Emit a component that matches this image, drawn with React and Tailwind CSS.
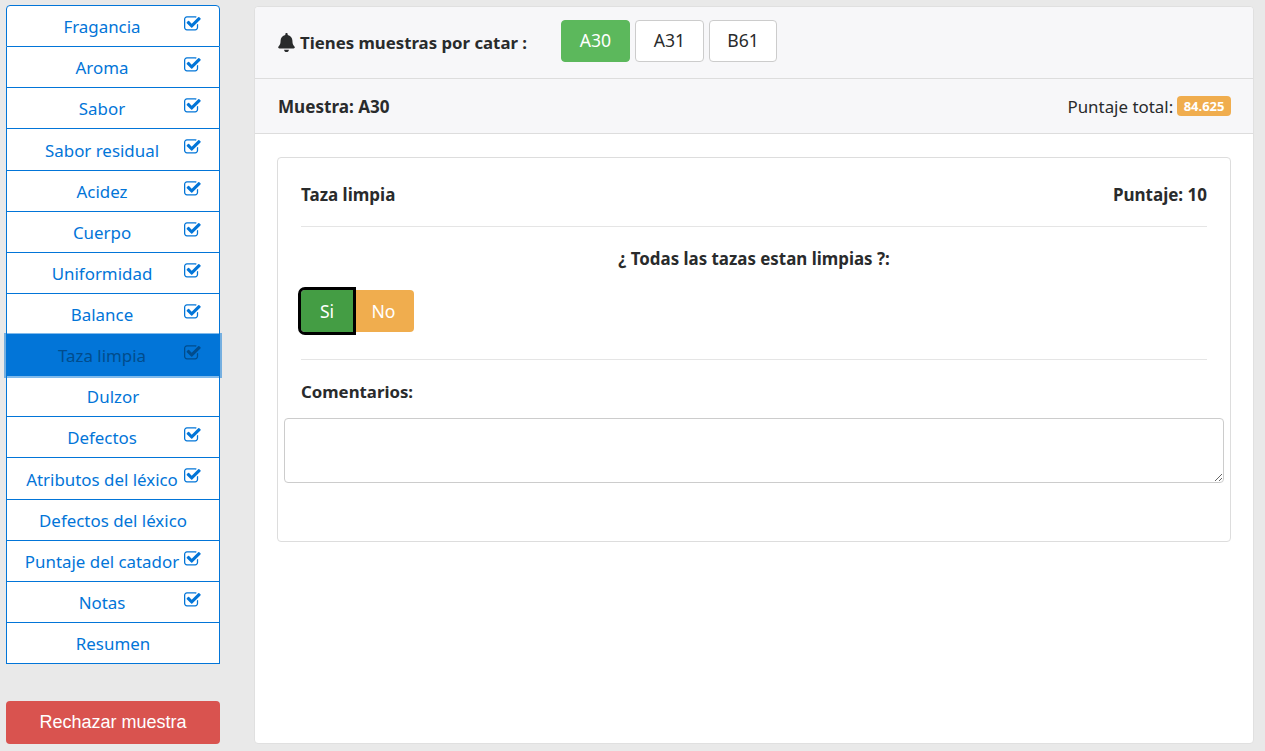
import React from "react";

const CHECK = "M1408 930v318q0 119-84.5 203.5T1120 1536H288q-119 0-203.5-84.5T0 1248V416q0-119 84.5-203.5T288 128h832q63 0 117 25 15 7 18 23 3 17-9 29l-49 49q-10 10-23 10-3 0-9-2-23-6-45-6H288q-66 0-113 47t-47 113v832q0 66 47 113t113 47h832q66 0 113-47t47-113V994q0-13 9-22l64-64q10-10 23-10 6 0 12 3 20 8 20 29zm231-489l-814 814q-24 24-57 24t-57-24L281 825q-24-24-24-57t24-57l110-110q24-24 57-24t57 24l263 263 647-647q24-24 57-24t57 24l110 110q24 24 24 57t-24 57z";

const items = [
  ["Fragancia", true], ["Aroma", true], ["Sabor", true], ["Sabor residual", true],
  ["Acidez", true], ["Cuerpo", true], ["Uniformidad", true], ["Balance", true],
  ["Taza limpia", true, true], ["Dulzor", false], ["Defectos", true],
  ["Atributos del léxico", true], ["Defectos del léxico", false],
  ["Puntaje del catador", true], ["Notas", true], ["Resumen", false],
];

function CheckIcon({ active }) {
  return (
    <svg viewBox="0 0 1792 1792" className={"absolute right-[17px] top-[9px] w-[18px] h-[18px] " + (active ? "text-[#014c8c]" : "text-[#0275d8]")} fill="currentColor">
      <path d={CHECK} />
    </svg>
  );
}

function Row({ label, checked, active, first }) {
  return (
    <div
      className={
        "relative pt-[1.4px] flex items-center justify-center text-[16.9px] border-x border-b border-[#0275d8] " +
        (first ? "h-[42.2px] border-t rounded-t " : "h-[41.125px] ") +
        (active
          ? "z-10 bg-[#0275d8] text-[#014c8c] shadow-[0_0_0_2px_rgba(2,117,216,0.5)]"
          : "bg-white text-[#0275d8]")
      }
    >
      <span className={checked ? "pr-[22px]" : ""}>{label}</span>
      {checked && <CheckIcon active={active} />}
    </div>
  );
}

function Bell() {
  return (
    <svg viewBox="0 0 448 512" className="w-[17px] h-[19px]" fill="currentColor">
      <path d="M224 512c35.3 0 64-28.700 64-64H160c0 35.300 28.700 64 64 64zm215.400-149.700c-19.300-20.800-55.500-52-55.500-154.300 0-77.700-54.500-139.900-127.900-155.200V32c0-17.700-14.300-32-32-32s-32 14.300-32 32v20.800C118.600 68.100 64.100 130.300 64.100 208c0 102.300-36.200 133.500-55.500 154.300-6 6.500-8.700 14.200-8.600 21.700.1 16.400 13 32 32.100 32h383.800c19.100 0 32-15.600 32.100-32 .1-7.500-2.600-15.200-8.600-21.700z" />
    </svg>
  );
}

export default function App() {
  return (
    <div
      className="h-[751px] overflow-hidden bg-[#e9e9e9] flex items-start text-[#292b2c] text-[17.6px]"
      style={{ fontFamily: '"Noto Sans", "Open Sans", sans-serif' }}
    >
      <aside className="w-[214px] ml-[6px] mt-[5px] shrink-0 flex flex-col">
        <div className="flex flex-col">
          {items.map(([label, checked, active], i) => (
            <Row key={label} label={label} checked={checked} active={active} first={i === 0} />
          ))}
        </div>
        <button
          className="mt-[37px] h-[43px] rounded bg-[#d9534f] text-white text-[18px] flex items-center justify-center"
          style={{ fontFamily: '"Liberation Sans", Arial, sans-serif' }}
        >
          Rechazar muestra
        </button>
      </aside>

      <main className="ml-[34px] mt-[6px] w-[1000px] h-[738px] bg-white border border-[#e0e0e0] rounded flex flex-col">
        <div className="h-[72px] bg-[#f7f7f9] border-b border-[#dddddd] rounded-t flex items-center pl-[23px] shrink-0">
          <div className="flex items-center gap-[5px] font-bold text-[#292b2c] w-[283px] text-[16.8px]">
            <Bell />
            <span>Tienes muestras por catar :</span>
          </div>
          <div className="flex gap-[5px] mb-[4px]">
            <span className="w-[69px] h-[42px] rounded bg-[#5cb85c] border border-[#5cb85c] text-white flex items-center justify-center">A30</span>
            <span className="w-[69px] h-[42px] rounded bg-white border border-[#cccccc] flex items-center justify-center">A31</span>
            <span className="w-[68px] h-[42px] rounded bg-white border border-[#cccccc] flex items-center justify-center">B61</span>
          </div>
        </div>

        <div className="h-[55px] pt-[1px] bg-[#f7f7f9] border-b border-[#dddddd] flex items-center justify-between pl-[23px] pr-[22px] shrink-0">
          <span className="font-bold text-[17.1px]">Muestra: A30</span>
          <span className="flex items-center gap-[4px] text-[16.9px]">
            Puntaje total:
            <span className="h-[20px] px-[6.5px] rounded bg-[#f0ad4e] text-white text-[13px] font-bold flex items-center">84.625</span>
          </span>
        </div>

        <div className="mt-[23px] mx-[22px] h-[385px] border border-[#dddddd] rounded flex flex-col">
          <div className="mx-[23px] h-[69px] pt-[5px] border-b border-[#e5e5e5] flex items-center justify-between font-bold text-[17px] shrink-0">
            <span>Taza limpia</span>
            <span>Puntaje: 10</span>
          </div>
          <p className="mt-[20px] text-center font-bold text-[16.9px] leading-[24px]">¿ Todas las tazas estan limpias ?:</p>
          <div className="mt-[19px] ml-[23px] flex">
            <button className="w-[52px] h-[42px] rounded-l bg-[#449d44] text-white outline-[3px] outline-black z-10 flex items-center justify-center">Si</button>
            <button className="w-[61px] h-[42px] rounded-r bg-[#f0ad4e] text-white flex items-center justify-center">No</button>
          </div>
          <div className="mx-[23px] mt-[27px] border-b border-[#e5e5e5]"></div>
          <p className="mt-[20px] ml-[23px] font-bold text-[16.8px] leading-[24px]">Comentarios:</p>
          <textarea className="block mt-[14px] mx-[6px] h-[65px] border border-[#cccccc] rounded bg-white resize-y"></textarea>
        </div>
      </main>
    </div>
  );
}
